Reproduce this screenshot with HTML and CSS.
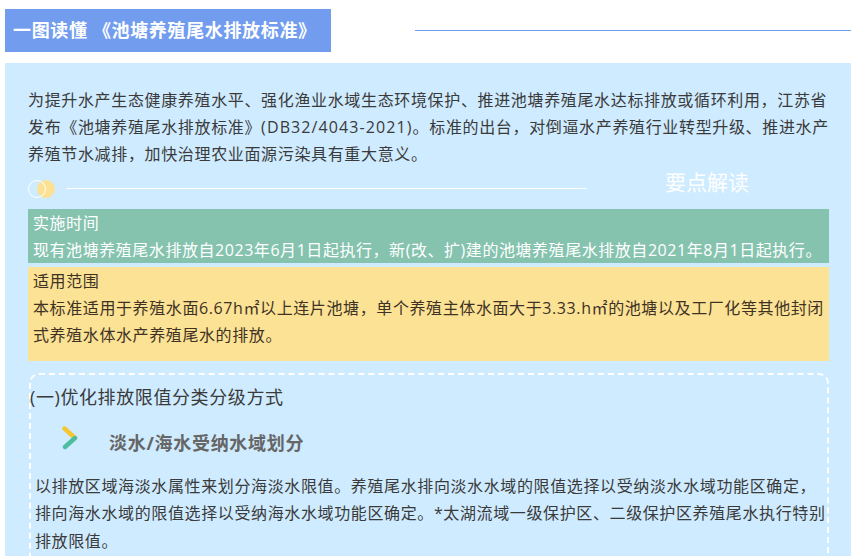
FILE: index.html
```html
<!DOCTYPE html>
<html lang="zh-CN">
<head>
<meta charset="utf-8">
<title>一图读懂《池塘养殖尾水排放标准》</title>
<link rel="stylesheet" href="styles.css">
</head>
<body>
<header class="head">
  <h1 class="head-title">一图读懂 《池塘养殖尾水排放标准》</h1>
  <div class="head-rule"></div>
</header>
<main class="panel">
  <p class="intro">为提升水产生态健康养殖水平、强化渔业水域生态环境保护、推进池塘养殖尾水达标排放或循环利用<span class="comma">，</span>江苏省<br>发布《池塘养殖尾水排放标准》<span class="code">(DB32/4043-2021)</span>。标准的出台<span class="comma">，</span>对倒逼水产养殖行业转型升级、推进水产<br>养殖节水减排<span class="comma">，</span>加快治理农业面源污染具有重大意义。</p>
  <div class="points">
    <span class="dots"><i class="dot-fill"></i><i class="dot-ring"></i></span>
    <span class="points-rule"></span>
    <span class="points-label">要点解读</span>
  </div>
  <section class="card card-green">
    <div>实施时间</div>
    <div>现有池塘养殖尾水排放自2023年6月1日起执行<span class="comma">，</span>新(改、扩)建的池塘养殖尾水排放自2021年8月1日起执行。</div>
  </section>
  <section class="card card-yellow">
    <div>适用范围</div>
    <div class="card-body">本标准适用于养殖水面6.67h㎡以上连片池塘<span class="comma">，</span>单个养殖主体水面大于3.33.h㎡的池塘以及工厂化等其他封闭<br>式养殖水体水产养殖尾水的排放。</div>
  </section>
  <section class="dashed">
    <h2 class="dashed-title">(一)优化排放限值分类分级方式</h2>
    <div class="sub">
      <svg class="chev" width="16" height="24" viewBox="0 0 16 24" aria-hidden="true">
        <path d="M2.5 2.5 L13 12" stroke="#f5c62f" stroke-width="4.4" stroke-linecap="round" fill="none"/>
        <path d="M13 12 L3 21" stroke="#4dbd9f" stroke-width="4.4" stroke-linecap="round" fill="none"/>
      </svg>
      <h3 class="sub-title">淡水/海水受纳水域划分</h3>
    </div>
    <p class="desc">以排放区域海淡水属性来划分海淡水限值。养殖尾水排向淡水水域的限值选择以受纳淡水水域功能区确定<span class="comma">，</span><br>排向海水水域的限值选择以受纳海水水域功能区确定。*太湖流域一级保护区、二级保护区养殖尾水执行特别<br>排放限值。</p>
  </section>
</main>
</body>
</html>
```
FILE: styles.css
```css
html, body {
  margin: 0;
  height: 556px;
  overflow: hidden;
  background: #fff;
}
body {
  font-family: "Open Sans", "Noto Sans CJK SC", sans-serif;
  font-size: 16px;
  letter-spacing: 0.65px;
  color: #3a3a3a;
}
.comma {
  font-family: "Noto Sans CJK TC", sans-serif;
  line-height: 0;
}
.code {
  letter-spacing: 1.1px;
}
.head {
  display: flex;
  align-items: center;
  margin: 9px 6px 11px 5px;
}
.head-title {
  width: 326px;
  height: 43px;
  box-sizing: border-box;
  margin: 0;
  padding-left: 8px;
  background: #729dee;
  color: #fff;
  font-size: 18px;
  font-weight: 700;
  line-height: 43px;
  white-space: nowrap;
}
.head-rule {
  flex: 1;
  height: 1px;
  margin: -1px 0 0 84px;
  background: #729dee;
}
.panel {
  margin: 0 6px 0 5px;
  height: 493px;
  box-sizing: border-box;
  padding: 24px 22px 0 23px;
  background: #cfebff;
  overflow: hidden;
}
.intro {
  margin: 0;
  line-height: 27px;
  white-space: nowrap;
}
.points {
  display: flex;
  align-items: center;
  height: 31px;
  margin-top: 4px;
}
.dots {
  position: relative;
  width: 27px;
  height: 18px;
  flex: none;
  margin-top: 2px;
}
.dot-ring, .dot-fill {
  position: absolute;
  top: 0;
  width: 18px;
  height: 18px;
  box-sizing: border-box;
  border-radius: 50%;
}
.dot-ring {
  left: 0;
  border: 1.5px solid #fff;
}
.dot-fill {
  left: 9px;
  background: #fce093;
}
.points-rule {
  width: 521px;
  height: 1px;
  margin: 2px 0 0 11px;
  background: #fff;
}
.points-label {
  margin: -14px 0 0 78px;
  color: #fff;
  font-size: 21px;
  letter-spacing: 0;
  white-space: nowrap;
}
.card {
  box-sizing: border-box;
  padding: 1px 0 0 5px;
  line-height: 27px;
  letter-spacing: 0.6px;
  white-space: nowrap;
}
.card-green {
  height: 54px;
  margin-top: 6px;
  background: #86c3af;
  color: #fff;
  letter-spacing: 0.55px;
}
.card-yellow {
  height: 94px;
  margin-top: 4px;
  background: #fbe294;
  color: #3f3224;
}
.dashed {
  margin: 12px 0 0 1px;
  height: 220px;
  box-sizing: border-box;
  border: 2px dashed #fff;
  border-radius: 10px;
}
.dashed-title {
  margin: 9px 0 0 -1px;
  font-size: 18px;
  font-weight: 400;
  line-height: 26px;
  letter-spacing: 0.6px;
  color: #3a3a3a;
}
.sub {
  display: flex;
  align-items: center;
  height: 36px;
  margin: 14px 0 0 31px;
}
.chev {
  flex: none;
  margin-top: -8px;
}
.sub-title {
  margin: 0 0 0 31px;
  font-size: 18px;
  font-weight: 700;
  color: #666;
  letter-spacing: 0.7px;
  white-space: nowrap;
}
.desc {
  margin: 13px 0 0 4px;
  line-height: 27.4px;
  letter-spacing: 0.62px;
  white-space: nowrap;
}
```
